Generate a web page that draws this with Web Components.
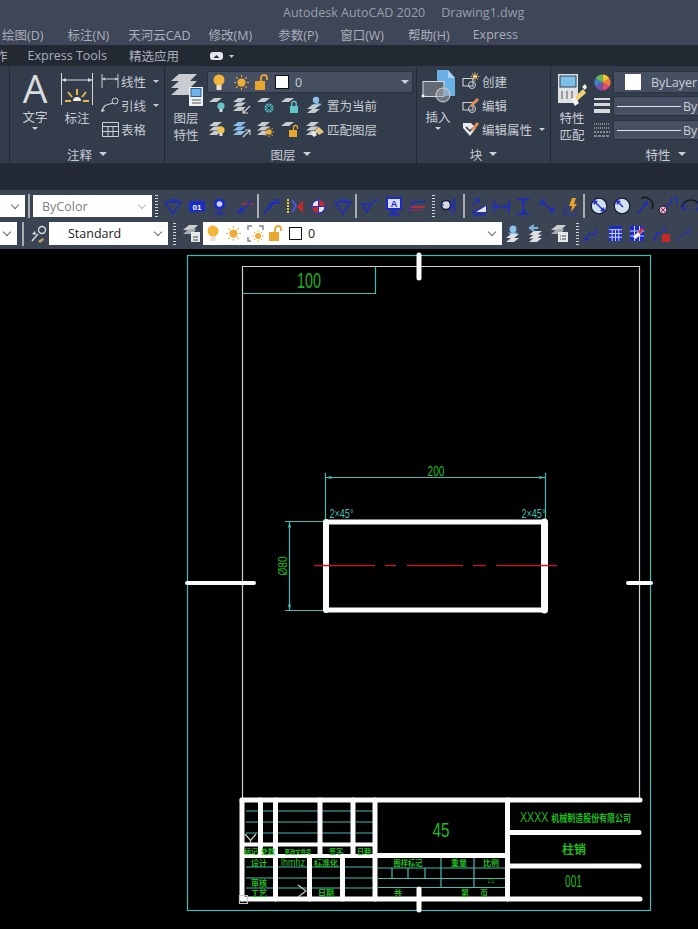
<!DOCTYPE html>
<html lang="zh">
<head>
<meta charset="utf-8">
<title>Autodesk AutoCAD 2020</title>
<style>
  html, body { margin: 0; height: 100%; background: #000; overflow: hidden; }
  body { font: 12.5px "Open Sans", "Noto Sans CJK SC", sans-serif; color: #c3c8d0; }
  #app { display: flex; flex-direction: column; width: 698px; height: 929px; overflow: hidden; }
</style>
</head>
<body>
<div id="app">
  <cad-title-bar>
    <span>Autodesk AutoCAD 2020</span>
    <span>Drawing1.dwg</span>
  </cad-title-bar>

  <cad-menu-bar>
    <span>绘图(D)</span>
    <span style="margin-left:24px">标注(N)</span>
    <span style="margin-left:19px">天河云CAD</span>
    <span style="margin-left:18px">修改(M)</span>
    <span style="margin-left:26px">参数(P)</span>
    <span style="margin-left:22px">窗口(W)</span>
    <span style="margin-left:24px">帮助(H)</span>
    <span style="margin-left:23px">Express</span>
  </cad-menu-bar>

  <cad-tab-bar>
    <span class="cut">作</span><span>Express Tools</span><span style="margin-left:2px">精选应用</span>
    <cad-icon name="tabpill" w="26" h="14"></cad-icon>
  </cad-tab-bar>

  <cad-ribbon>
    <cad-panel width="9"></cad-panel>

    <cad-panel width="155" label="注释" edge>
      <div style="display:flex;padding-left:8px">
        <cad-large-tool icon="bigA" arrow>文字</cad-large-tool>
        <cad-large-tool icon="dim" style="margin-left:8px">标注</cad-large-tool>
        <div style="display:flex;flex-direction:column;margin-left:7px;padding-top:3px">
          <cad-small-tool icon="linear" arrow>线性</cad-small-tool>
          <cad-small-tool icon="leader" arrow>引线</cad-small-tool>
          <cad-small-tool icon="table">表格</cad-small-tool>
        </div>
      </div>
    </cad-panel>

    <cad-panel width="252" label="图层" edge>
      <div style="display:flex;padding-left:4px">
        <cad-large-tool icon="layers">图层<br>特性</cad-large-tool>
        <div style="display:flex;flex-direction:column;margin-left:4px;padding-top:5px">
          <cad-combo width="206" height="22" tone="dark" caret>
            <cad-icon name="bulb" w="22"></cad-icon>
            <cad-icon name="sun" w="22"></cad-icon>
            <cad-icon name="lock" w="20"></cad-icon>
            <cad-icon name="swatch" w="20"></cad-icon>
            <span style="margin-left:3px">0</span>
          </cad-combo>
          <cad-icon-row text="置为当前">
            <cad-icon name="lOff" w="22"></cad-icon>
            <cad-icon name="lDown" w="25"></cad-icon>
            <cad-icon name="lFreeze" w="24"></cad-icon>
            <cad-icon name="lLock" w="24"></cad-icon>
            <cad-icon name="lCurrent" w="25"></cad-icon>
          </cad-icon-row>
          <cad-icon-row text="匹配图层">
            <cad-icon name="lBulb" w="22"></cad-icon>
            <cad-icon name="lUp" w="25"></cad-icon>
            <cad-icon name="lSun" w="24"></cad-icon>
            <cad-icon name="lOpen" w="24"></cad-icon>
            <cad-icon name="lMatch" w="25"></cad-icon>
          </cad-icon-row>
        </div>
      </div>
    </cad-panel>

    <cad-panel width="134" label="块" edge>
      <div style="display:flex;padding-left:4px">
        <cad-large-tool icon="insert" arrow>插入</cad-large-tool>
        <div style="display:flex;flex-direction:column;margin-left:7px;padding-top:3px">
          <cad-small-tool icon="blockNew">创建</cad-small-tool>
          <cad-small-tool icon="blockEdit">编辑</cad-small-tool>
          <cad-small-tool icon="attEdit" arrow>编辑属性</cad-small-tool>
        </div>
      </div>
    </cad-panel>

    <cad-panel width="230" label="特性" edge>
      <div style="display:flex;padding-left:4px">
        <cad-large-tool icon="match">特性<br>匹配</cad-large-tool>
        <div style="display:flex;flex-direction:column;width:24px;padding-top:4px">
          <cad-icon name="wheel" w="26" h="24"></cad-icon>
          <cad-icon name="weight" w="26" h="24"></cad-icon>
          <cad-icon name="dotted" w="26" h="24"></cad-icon>
        </div>
        <div style="display:flex;flex-direction:column;padding-top:5px">
          <cad-combo width="100" height="22" tone="dark"><cad-icon name="bigSwatch" w="34" h="18" style="margin-left:2px"></cad-icon><span style="margin-left:1px">ByLayer</span></cad-combo>
          <cad-combo width="100" height="20" tone="dark" style="margin-top:3px"><cad-line></cad-line><span style="margin-left:2px">ByLayer</span></cad-combo>
          <cad-combo width="100" height="20" tone="dark" style="margin-top:4px"><cad-line></cad-line><span style="margin-left:2px">ByLayer</span></cad-combo>
        </div>
      </div>
    </cad-panel>
  </cad-ribbon>

  <cad-strip></cad-strip>

  <cad-toolbar height="31" style="padding-top:1px">
    <cad-combo width="25" height="22" tone="light" caret></cad-combo>
    <cad-sep width="7"></cad-sep>
    <cad-combo width="119" height="22" tone="light" caret dim style="margin-left:1px"><span style="margin-left:9px;color:#7d8084">ByColor</span></cad-combo>
    <cad-grip width="9"></cad-grip>
    <cad-icon name="t1" w="24" h="22"></cad-icon>
    <cad-icon name="t2" w="23" h="22"></cad-icon>
    <cad-icon name="t3" w="23" h="22"></cad-icon>
    <cad-icon name="t4" w="26" h="22"></cad-icon>
    <cad-sep width="2"></cad-sep>
    <cad-icon name="t5" w="24" h="22"></cad-icon>
    <cad-icon name="t6" w="24" h="22"></cad-icon>
    <cad-icon name="t7" w="23" h="22"></cad-icon>
    <cad-icon name="t1" w="25" h="22"></cad-icon>
    <cad-sep width="2"></cad-sep>
    <cad-icon name="t8" w="25" h="22"></cad-icon>
    <cad-icon name="t9" w="23" h="22"></cad-icon>
    <cad-icon name="t10" w="24" h="22"></cad-icon>
    <cad-grip width="8"></cad-grip>
    <cad-icon name="t11" w="23" h="22"></cad-icon>
    <cad-sep width="7"></cad-sep>
    <cad-icon name="t12" w="23" h="22"></cad-icon>
    <cad-icon name="t13" w="22" h="22"></cad-icon>
    <cad-icon name="t14" w="22" h="22"></cad-icon>
    <cad-icon name="t15" w="26" h="22"></cad-icon>
    <cad-icon name="t16" w="20" h="22"></cad-icon>
    <cad-sep width="8"></cad-sep>
    <cad-icon name="t17" w="22" h="22"></cad-icon>
    <cad-icon name="t18" w="24" h="22"></cad-icon>
    <cad-icon name="t19" w="22" h="22"></cad-icon>
    <cad-icon name="t20" w="24" h="22"></cad-icon>
    <cad-icon name="t21" w="22" h="22"></cad-icon>
  </cad-toolbar>

  <cad-toolbar height="28" style="padding-bottom:3px">
    <cad-combo width="17" height="23" tone="light" caret></cad-combo>
    <cad-sep width="12"></cad-sep>
    <cad-icon name="styleIcon" w="20" h="22"></cad-icon>
    <cad-combo width="119" height="23" tone="light" caret><span style="margin-left:19px;color:#1d1d1d">Standard</span></cad-combo>
    <cad-grip width="12"></cad-grip>
    <cad-icon name="layerBox" w="23" h="22"></cad-icon>
    <cad-combo width="299" height="23" tone="light" caret>
      <cad-icon name="bulb" w="20"></cad-icon>
      <cad-icon name="sun" w="20"></cad-icon>
      <cad-icon name="vpFreeze" w="24"></cad-icon>
      <cad-icon name="lock" w="18"></cad-icon>
      <cad-icon name="swatchSmall" w="20"></cad-icon>
      <span style="margin-left:3px;color:#1d1d1d">0</span>
    </cad-combo>
    <cad-icon name="r1" w="22" h="22"></cad-icon>
    <cad-icon name="r2" w="24" h="22"></cad-icon>
    <cad-icon name="r3" w="22" h="22"></cad-icon>
    <cad-grip width="14"></cad-grip>
    <cad-icon name="r4" w="16" h="22"></cad-icon>
    <cad-spacer width="4"></cad-spacer>
    <cad-icon name="r5" w="22" h="22"></cad-icon>
    <cad-icon name="r6" w="22" h="22"></cad-icon>
    <cad-icon name="r7" w="28" h="22"></cad-icon>
    <cad-icon name="r8" w="18" h="22"></cad-icon>
  </cad-toolbar>

  <cad-drawing></cad-drawing>
</div>

<script>
// Small shape helpers shared by the icon table.
const BLUE = '#1a2bc8'
const GREY = '#c8cbd0'
const slab = (x, y, fill = GREY) => `<path d="M${x + 5} ${y}h8l-5 4H${x}z" fill="${fill}"/>`
const stack = (x, y, fill = GREY) => slab(x, y, fill) + slab(x, y + 4.5, fill) + slab(x, y + 9, fill)
const bulb = (cx, cy, c) => `<circle cx="${cx}" cy="${cy}" r="3.600" fill="${c}"/><rect x="${cx - 1.5}" y="${cy + 3}" width="3" height="3" fill="#d8d8d8"/>`
const padlock = (x, y, c) => `<rect x="${x}" y="${y + 5}" width="8" height="7" fill="${c}"/><path d="M${x + 1.8} ${y + 5}V${y + 2.5}a2.200 2.200 0 0 1 4.400 0V${y + 5}" fill="none" stroke="${c}" stroke-width="1.400"/>`
const rays = (cx, cy, r, c) => {
  let out = `<circle cx="${cx}" cy="${cy}" r="${r * 0.55}" fill="${c}"/>`
  for (let i = 0; i < 8; i++) {
    const a = i * Math.PI / 4
    out += `<path d="M${cx + Math.cos(a) * r * 0.72} ${cy + Math.sin(a) * r * 0.72}L${cx + Math.cos(a) * r} ${cy + Math.sin(a) * r}" stroke="${c}" stroke-width="1.100"/>`
  }
  return out
}
const line = (d, c = BLUE, w = 1.4) => `<path d="${d}" fill="none" stroke="${c}" stroke-width="${w}"/>`
const dashed = (d, dash) => line(d, '#d5d7da', 1).replace('/>', ` stroke-dasharray="${dash}"/>`)

// name: [svg width, svg height, markup]
const ICONS = {
  tabpill: [24, 10, '<rect x="0" y="1" width="13" height="8" rx="3" fill="#e4e6ea"/><path d="M3.500 7l3-3 3 3z" fill="#2a313c"/><path d="M19 4h5l-2.500 3z" fill="#c8ccd3"/>'],
  bigA: [32, 32, '<text x="16" y="30" text-anchor="middle" font-family="Open Sans" font-size="39" fill="#d9dbdf">A</text>'],
  dim: [32, 33, line('M.5 0V32M31.5 0V32', '#d5d7da', 1) + line('M1 7H31', '#d5d7da', 1) + '<path d="M1 7l4-2v4zM31 7l-4-2v4z" fill="#d5d7da"/>' + line('M16 16v6M7 19l4 5M25 19l-4 5M4 28h6M22 28h6', '#e6b845', 2) + '<path d="M12 28a4 4 0 0 1 8 0z" fill="#f2efe2"/>'],
  linear: [18, 16, line('M1 1V15M17 1V15', '#cdd0d5', 1) + line('M1 6H17', '#cdd0d5', 1) + '<path d="M1 6l3-1.500v3zM17 6l-3-1.500v3z" fill="#cdd0d5"/>'],
  leader: [18, 16, line('M1 14C3 7 6 8 12 6', '#cdd0d5', 1.2) + '<circle cx="14" cy="4" r="3" fill="none" stroke="#cdd0d5"/><path d="M0 15l4-1-3-3z" fill="#cdd0d5"/>'],
  table: [17, 15, line('M.5 .5H16.500V14.500H.5ZM.5 4.500H16.500M.5 9.500H16.500M6 4.500V14.500M11 4.500V14.500', '#cdd0d5', 1)],
  layers: [33, 33, '<path d="M9 1H27L20 8H1z" fill="#c9ccd1"/><path d="M9 8H27L20 15H1z" fill="#c9ccd1"/><path d="M9 15H20V22H1z" fill="#c9ccd1"/><rect x="19" y="14" width="14" height="19" fill="#eef0f2"/><rect x="21" y="15.500" width="10" height="8" fill="#6fb2e8" stroke="#2c5f8e"/>' + line('M22 27h9M31 30h-9', '#555', 1)],
  bulb: [12, 17, '<circle cx="6" cy="6" r="5.500" fill="#f4b63a"/><rect x="3.500" y="11" width="5" height="5" fill="#e8e2d2"/>'],
  sun: [15, 15, rays(7.5, 7.5, 7.5, '#f0ad3b')],
  lock: [14, 15, '<rect x="0" y="6" width="10" height="9" fill="#eba62f"/><path d="M6 6V3a3 3 0 0 1 6 0v2" fill="none" stroke="#eba62f" stroke-width="1.800"/>'],
  swatch: [14, 14, '<rect x=".5" y=".5" width="13" height="13" fill="#fff" stroke="#111"/>'],
  swatchSmall: [13, 13, '<rect x=".5" y=".5" width="12" height="12" fill="#fff" stroke="#111"/>'],
  bigSwatch: [16, 16, '<rect width="16" height="16" fill="#fff"/>'],
  lOff: [18, 17, slab(0, 1) + bulb(12, 9, '#67c6c9')],
  lDown: [18, 17, stack(0, 1) + line('M17 9l-7 7M10 11v5h5', '#d8dade', 1.1)],
  lFreeze: [18, 17, slab(0, 1) + '<circle cx="12" cy="11" r="4.500" fill="#4fb3b5"/>' + line('M12 6.500v9M7.500 11h9M9 8l6 6M15 8l-6 6', '#27303d', .7)],
  lLock: [18, 17, slab(0, 1) + padlock(9, 4, '#62c5c8')],
  lCurrent: [18, 18, '<circle cx="10" cy="4" r="3.200" fill="#8cc1ea"/><path d="M5 9l6-2 5 1-5 3z" fill="#8cc1ea"/>' + slab(1, 9, GREY) + slab(1, 13, GREY)],
  lBulb: [18, 17, stack(0, 1) + bulb(12, 9, '#f4c04d')],
  lUp: [18, 17, stack(0, 1, '#8abfe8') + line('M10 16l7-7M12 9h5v5', '#d8dade', 1.1)],
  lSun: [18, 17, stack(0, 1) + rays(12, 11, 5, '#e9ad3b')],
  lOpen: [18, 17, slab(0, 1) + '<rect x="8" y="9" width="8" height="7" fill="#eba62f"/><path d="M12.500 9V6.500a2 2 0 0 1 4 0V8" fill="none" stroke="#eba62f" stroke-width="1.300"/>'],
  lMatch: [18, 17, stack(0, 1) + '<path d="M9 9l4-3 5 5-5 3z" fill="#e5c784"/><path d="M8 10l3 4-3 2-3-3z" fill="#e8e8e8"/>'],
  insert: [33, 32, '<g transform="translate(0 -3)"><path d="M15 0h11l7 8v18H15z" fill="#69b0e6"/><path d="M26 0l7 8h-7z" fill="#a9d2f2"/><rect x="1" y="11.500" width="21" height="15" fill="#646a74" stroke="#d6d8dc"/><circle cx="21" cy="25" r="7" fill="rgba(160,165,175,.55)" stroke="#d6d8dc"/><circle cx="1" cy="26" r="1.500" fill="#fff"/></g>'],
  blockNew: [18, 17, line('M1 6.500H11V14H1Z', '#cfd2d6', 1.1) + '<circle cx="10" cy="13" r="3.500" fill="none" stroke="#cfd2d6"/>' + rays(13, 4.5, 4.2, '#eec278')],
  blockEdit: [18, 17, line('M1 6.500H11V14H1Z', '#cfd2d6', 1.1) + '<circle cx="10" cy="13" r="3.500" fill="none" stroke="#cfd2d6"/><path d="M9 8l6-6 2 2-6 6-3 1z" fill="#eb8b55"/>'],
  attEdit: [18, 17, '<path d="M1 3H9l5 5-6 8-7-8z" fill="#e7e8ea"/><path d="M4 7l4 4 3-3" fill="none" stroke="#2f3846" stroke-width="1.500"/><path d="M10 8l5-6 2 2-5 6-3 1z" fill="#eb8b55"/>'],
  match: [30, 33, '<rect x="1" y="1" width="20" height="29" fill="#dfe1e4"/><rect x="3" y="3" width="16" height="11" fill="#7cc0ee" stroke="#31424f"/>' + line('M5 18v8M10 18v8M15 18v8', '#555', 1) + '<path d="M17 25l9-9 3 4-9 8z" fill="#f1d374"/><path d="M14 26l4-2 4 6-4 3z" fill="#f0f0f0"/><path d="M25 14l3-3 2 3-2 3z" fill="#eee"/>'],
  wheel: [17, 17, '<path d="M8.500 8.500V.5a8 8 0 0 1 6.900 4z" fill="#f7c52d"/><path d="M8.500 8.500l6.900-4a8 8 0 0 1 0 8z" fill="#f37c3a"/><path d="M8.500 8.500l6.900 4a8 8 0 0 1-6.900 4z" fill="#d94a77"/><path d="M8.500 8.500v8a8 8 0 0 1-6.900-4z" fill="#7d4fa8"/><path d="M8.500 8.500l-6.900 4a8 8 0 0 1 0-8z" fill="#3a82c4"/><path d="M8.500 8.500l-6.900-4a8 8 0 0 1 6.900-4z" fill="#5fb85b"/>'],
  weight: [16, 16, '<rect y="0" width="16" height="2" fill="#d5d7da"/><rect y="5" width="16" height="3" fill="#d5d7da"/><rect y="11" width="16" height="4" fill="#d5d7da"/>'],
  dotted: [16, 15, dashed('M0 1H16', '1 1') + dashed('M0 5H16', '1 1') + dashed('M0 9H16', '2 1') + dashed('M0 13H16', '3 1')],
  t1: [18, 18, line('M1 5H17L9 17Z') + line('M6 3H14')],
  t2: [16, 11, `<rect width="16" height="11" fill="${BLUE}"/><text x="8" y="8.500" text-anchor="middle" font-family="Liberation Sans" font-weight="700" font-size="8" fill="#fff">01</text>`],
  t3: [13, 17, `<circle cx="6.500" cy="6" r="5.500" fill="${BLUE}"/><circle cx="6.500" cy="6" r="2.800" fill="#cdd5ff"/>` + line('M6.500 12V15M1 16H12')],
  t4: [17, 14, line('M6 5H17', '#c62828', 1.500) + line('M16 2L5 12M1 13L8 13') + `<path d="M1 13l4-5 2 3z" fill="${BLUE}"/>`],
  t5: [17, 17, line('M1 16L8 5H17') + line('M6 12L12 2H17')],
  t6: [17, 17, '<path d="M1 1v15" stroke="#dfd23a" stroke-dasharray="2 1" stroke-width="2"/><path d="M5 2l4 6-4 6" stroke="#4b55e0" fill="none" stroke-width="2"/><path d="M16 2v13l-6-6z" fill="#c62828"/>'],
  t7: [17, 17, `<circle cx="8.500" cy="8.500" r="6.500" fill="#e7e8f2" stroke="${BLUE}"/><path d="M8.500 8.500V2a6.500 6.500 0 0 1 6.500 6.500z" fill="#c62828"/><path d="M8.500 8.500V15a6.500 6.500 0 0 1-6.500-6.500z" fill="#c62828"/>` + line('M0 8.500H17M8.500 0V17', BLUE, 1)],
  t8: [18, 14, line('M0 5H10L6 13L1 5M10 5L15 1H18')],
  t9: [16, 17, `<rect x="1" y="0" width="14" height="11" fill="#d6dcf6" stroke="${BLUE}" stroke-width="2"/><text x="8" y="9" text-anchor="middle" font-family="Liberation Sans" font-weight="700" font-size="9" fill="${BLUE}">A</text><path d="M8 11l4 4H4z" fill="${BLUE}"/>` + line('M2 16.500H14', BLUE, 1.600)],
  t10: [18, 16, line('M1 15L5 4H17', BLUE) + line('M3 9H17', '#b0303c', 2) + line('M1 12H14', '#8a2f5e', 1.400)],
  t11: [18, 18, '<circle cx="6" cy="8" r="4.500" fill="#d8dae0" stroke="#161b3e" stroke-width="1.400"/>' + line('M1 8H4M9 12L14 17M14 1V13M16 2L11 8L16 13', BLUE, 1.200)],
  t12: [16, 17, line('M1 14H15V8L3 14ZM2 16.500H15', BLUE) + '<path d="M15 8v6H5z" fill="#e8e8e8"/>' + line('M2 7L8 1M3 1H8V6', BLUE, 1.200)],
  t13: [17, 13, line('M1 0V13M16 0V13M1 6.500H16') + `<path d="M1 6.500l4-2.500v5zM16 6.500l-4-2.500v5z" fill="${BLUE}"/>`],
  t14: [13, 17, line('M0 1H13M0 16H13M6.500 1V16') + `<path d="M6.500 1l-2.500 4h5zM6.500 16l-2.500-4h5z" fill="${BLUE}"/>`],
  t15: [17, 16, line('M2 3L15 14M0 7L6 1M11 15L17 9') + `<path d="M2 3l5 1-3 3zM15 14l-5-1 3-3z" fill="${BLUE}"/>`],
  t16: [17, 17, line('M0 12H16M4 5V17M0 17H16', BLUE, 1).replace('/>', ' stroke-dasharray="2 1"/>') + '<path d="M10 0l-3 8h3l-1 6 6-8h-3l2-6z" fill="#eaa128"/>'],
  t17: [18, 18, '<circle cx="9" cy="9" r="7.800" fill="#cfe0ee" stroke="#1a1c33" stroke-width="1.300"/>' + line('M4 4L14 14') + `<path d="M3 3l5 1-4 4zM15 15l-5-1 4-4z" fill="${BLUE}"/>`],
  t18: [18, 18, '<circle cx="9" cy="9" r="7.800" fill="#cfe0ee" stroke="#1a1c33" stroke-width="1.300"/>' + line('M4 4L10 10') + `<path d="M3 3l5 1-4 4z" fill="${BLUE}"/>`],
  t19: [18, 18, line('M5 1.500A8 8 0 0 1 16 12', '#16181f', 1.500) + line('M2 16L11 5') + `<path d="M12 4l-1 5-4-3z" fill="${BLUE}"/>`],
  t20: [20, 18, '<circle cx="5" cy="13" r="4" fill="#e7b4c8" stroke="#1a1c33"/>' + line('M2.500 10.500l5 5M7.500 10.500l-5 5', '#8a2f5e', 1) + line('M8 10L13 6V1H19V7', BLUE, 1.200)],
  t21: [20, 12, line('M1 8A9 8 0 0 1 19 8', '#16181f', 1.500) + line('M4 3L1 8L6 10M16 3L19 8L14 10')],
  styleIcon: [18, 18, line('M2 16L8 9', '#d8dade', 1.500) + '<circle cx="12" cy="5" r="3.500" fill="none" stroke="#d8dade" stroke-width="1.400"/><path d="M2 9l3-3 1 4z" fill="#d8dade"/><path d="M8 16l5-3 1 2-4 3z" fill="#c6a26a"/>'],
  layerBox: [17, 17, '<path d="M6 0h9l-5 5H0z" fill="#c9ccd1"/><path d="M6 4h7l-3 5H0z" fill="#a9acb1"/><rect x="8" y="7" width="9" height="10" fill="#e6e8ea"/>' + line('M10 12h5M10 15h5', '#444', 1)],
  vpFreeze: [17, 17, line('M1 5V1H5M12 1H16V5M1 12V16H4', '#7b7f86', 1.400) + rays(11, 11, 5.5, '#f0ad3b')],
  r1: [18, 17, '<circle cx="9" cy="4" r="3.500" fill="#8cc1ea"/><path d="M4 8l5-1 5 1-5 3z" fill="#8cc1ea"/>' + slab(2, 9, '#dfe1e4') + slab(2, 13, '#dfe1e4')],
  r2: [18, 17, line('M11 3H4M7 0L3 3L7 6', '#7fb7e4', 2) + slab(2, 6, '#dfe1e4') + slab(2, 9.5, '#dfe1e4') + slab(2, 13, '#dfe1e4')],
  r3: [17, 17, '<path d="M6 0h9l-5 5H0z" fill="#c9ccd1"/><path d="M6 4h7l-3 5H0z" fill="#a9acb1"/><rect x="7" y="7" width="10" height="10" fill="#e6e8ea"/>' + line('M9 11h1M11 11h4M9 14h1M11 14h4', '#444', 1)],
  r4: [18, 16, line('M1 15L6 8H13') + `<circle cx="4" cy="13" r="1.500" fill="${BLUE}"/><text x="13" y="6.500" text-anchor="middle" font-family="Liberation Sans" font-size="8" fill="${BLUE}">3</text>`],
  r5: [13, 15, `<rect width="13" height="15" fill="${BLUE}"/>` + line('M0 3.700H13M0 7.500H13M0 11.200H13M3.200 3V15M6.500 3V15M9.800 3V15', '#c9d0f5', 1)],
  r6: [14, 15, `<rect width="14" height="15" fill="${BLUE}"/>` + line('M0 5H14M0 10H14M4.500 0V15M9.500 0V15', '#c9d0f5', 1) + '<path d="M3 11l8-8 2 2-7 8z" fill="#f2f2f2"/><path d="M8 6l4-5 2 2-4 5z" fill="#cc2f2f"/>'],
  r7: [18, 17, line('M1 16L4 8H9') + `<text x="11" y="6.500" text-anchor="middle" font-family="Liberation Sans" font-size="8" fill="${BLUE}">3</text><rect x="9" y="9" width="8" height="8" fill="#c62828"/>`],
  r8: [18, 16, line('M1 15L7 7H12').replace('/>', ' stroke-dasharray="2 1.500"/>') + `<text x="13" y="6.500" text-anchor="middle" font-family="Liberation Sans" font-size="8" fill="${BLUE}">3</text>`]
}

/**
 * Defines a component whose shadow root is cloned from the given markup.
 *
 * @param {string} tag - Element name.
 * @param {string} html - Template markup.
 * @param {Function} [setup] - Called with the element once it is connected.
 */
function component (tag, html, setup) {
  const template = document.createElement('template')
  template.innerHTML = html
  customElements.define(tag, class extends HTMLElement {
    constructor () {
      super()
      this.attachShadow({ mode: 'open' }).appendChild(template.content.cloneNode(true))
    }

    connectedCallback () {
      if (setup) setup(this, this.shadowRoot)
    }
  })
}

const arrowCss = `.arrow { width: 0; height: 0; border: 3px solid transparent; border-top: 3px solid #c8ccd3; border-bottom: 0; }`

component('cad-icon', `
  <style>
    :host { display: inline-flex; flex: none; align-items: center; justify-content: center; }
    svg { flex: none; display: block; overflow: visible; }
  </style>
  <div id="glyph" style="display:contents"></div>
`, (el, root) => {
  const [w, h, body] = ICONS[el.getAttribute('name')]
  el.style.width = (el.getAttribute('w') || w) + 'px'
  el.style.height = (el.getAttribute('h') || 22) + 'px'
  root.querySelector('#glyph').innerHTML = `<svg width="${w}" height="${h}" viewBox="0 0 ${w} ${h}">${body}</svg>`
})

component('cad-title-bar', `
  <style>
    :host { display: flex; flex: none; height: 23px; align-items: center; gap: 16px; padding-left: 283px; padding-top: 1px; box-sizing: border-box; background: #3e4657; color: #98a0ad; }
  </style>
  <slot></slot>
`)

component('cad-menu-bar', `
  <style>
    :host { display: flex; flex: none; height: 22px; align-items: center; padding-left: 2px; background: #3e4657; color: #aab0bb; white-space: nowrap; }
  </style>
  <slot></slot>
`)

component('cad-tab-bar', `
  <style>
    :host { display: flex; flex: none; height: 21px; align-items: center; gap: 20px; background: #222933; color: #aab0bb; white-space: nowrap; }
    ::slotted(.cut) { margin-left: -5px; }
    ::slotted(cad-icon) { margin-left: 10px; }
  </style>
  <slot></slot>
`)

component('cad-ribbon', `
  <style>
    :host { display: flex; flex: none; height: 97px; overflow: hidden; background: #333c4b; }
  </style>
  <slot></slot>
`)

component('cad-panel', `
  <style>
    :host { display: flex; flex: none; flex-direction: column; box-sizing: border-box; height: 97px; color: #c8ccd3; overflow: hidden; }
    :host([edge]) { border-left: 1px solid #232a35; }
    .body { height: 76px; flex: none; }
    .foot { display: flex; flex: none; height: 24px; align-items: center; justify-content: center; gap: 7px; color: #c8ccd3; }
    .foot i { width: 0; height: 0; border: 4px solid transparent; border-top: 4px solid #c8ccd3; border-bottom: 0; }
    .foot:empty { display: none; }
  </style>
  <div class="body"><slot></slot></div>
  <div class="foot"></div>
`, (el, root) => {
  el.style.width = el.getAttribute('width') + 'px'
  const label = el.getAttribute('label')
  if (label) root.querySelector('.foot').innerHTML = `<span>${label}</span><i></i>`
})

component('cad-large-tool', `
  <style>
    :host { display: flex; flex: none; flex-direction: column; align-items: center; width: 34px; padding-top: 4px; line-height: 17px; text-align: center; }
    ${arrowCss}
    .arrow { margin-top: 1px; }
  </style>
  <div class="icon"></div>
  <span><slot></slot></span>
  <div class="arrow"></div>
`, (el, root) => {
  root.querySelector('.icon').innerHTML = `<cad-icon name="${el.getAttribute('icon')}" w="34" h="38"></cad-icon>`
  if (!el.hasAttribute('arrow')) root.querySelector('.arrow').style.display = 'none'
})

component('cad-small-tool', `
  <style>
    :host { display: flex; flex: none; height: 24px; align-items: center; white-space: nowrap; }
    span { margin-left: 2px; }
    ${arrowCss}
    .arrow { margin-left: 7px; }
  </style>
  <div class="icon"></div>
  <span><slot></slot></span>
  <div class="arrow"></div>
`, (el, root) => {
  root.querySelector('.icon').innerHTML = `<cad-icon name="${el.getAttribute('icon')}" w="18" h="24"></cad-icon>`
  if (!el.hasAttribute('arrow')) root.querySelector('.arrow').style.display = 'none'
})

component('cad-icon-row', `
  <style>
    :host { display: flex; flex: none; height: 24px; align-items: center; white-space: nowrap; }
  </style>
  <slot></slot><span></span>
`, (el, root) => {
  root.querySelector('span').textContent = el.getAttribute('text')
})

component('cad-combo', `
  <style>
    :host { display: flex; flex: none; box-sizing: border-box; align-items: center; white-space: nowrap; overflow: hidden; }
    :host([tone=dark]) { background: #465062; color: #c9cdd4; border: 1px solid #2a323f; border-radius: 2px; }
    :host([tone=light]) { background: #fff; color: #1d1d1d; }
    .caret { margin-left: auto; flex: none; }
    :host([tone=dark]) .caret { width: 0; height: 0; margin-right: 3px; border: 4px solid transparent; border-top: 4px solid #c9cdd4; border-bottom: 0; }
    :host([tone=light]) .caret { width: 6px; height: 6px; box-sizing: border-box; margin-right: 7px; margin-top: -3px; border: solid #6a6a6a; border-width: 0 1.3px 1.3px 0; transform: rotate(45deg); }
    :host([dim]) .caret { border-color: #b9bbbe; }
  </style>
  <slot></slot>
  <div class="caret"></div>
`, (el, root) => {
  el.style.width = el.getAttribute('width') + 'px'
  el.style.height = el.getAttribute('height') + 'px'
  if (!el.hasAttribute('caret')) root.querySelector('.caret').style.display = 'none'
})

component('cad-line', `
  <style>
    :host { display: block; flex: none; width: 64px; height: 1px; margin-left: 3px; background: #e4e6ea; }
  </style>
`)

component('cad-strip', `
  <style>
    :host { display: block; flex: none; height: 27px; background: #232a35; }
  </style>
`)

component('cad-toolbar', `
  <style>
    :host { display: flex; flex: none; align-items: center; box-sizing: border-box; background: #3b4452; overflow: hidden; }
  </style>
  <slot></slot>
`, (el) => { el.style.height = el.getAttribute('height') + 'px' })

component('cad-sep', `
  <style>
    :host { display: flex; flex: none; height: 24px; justify-content: center; }
    div { width: 2px; height: 100%; background: #a9adb3; }
  </style>
  <div></div>
`, (el) => { el.style.width = el.getAttribute('width') + 'px' })

component('cad-grip', `
  <style>
    :host { display: flex; flex: none; height: 22px; justify-content: center; }
    div { width: 3px; height: 100%; background: repeating-linear-gradient(#cfd2d6 0 1px, transparent 1px 3px); }
  </style>
  <div></div>
`, (el) => { el.style.width = el.getAttribute('width') + 'px' })

component('cad-spacer', `
  <style>:host { display: block; flex: none; }</style>
`, (el) => { el.style.width = el.getAttribute('width') + 'px' })

// Free canvas: coordinates below are page pixels, the viewBox starts at the canvas top.
const drawingSvg = () => {
  const GREEN = '#1fbd1f'
  const CYAN = '#45bcb0'
  const WHITE = '#fbfbfb'
  const seg = (d, w = 5) => `<path d="${d}" fill="none" stroke="${WHITE}" stroke-width="${w}" stroke-linecap="round"/>`
  const thin = (d, c = CYAN) => `<path d="${d}" fill="none" stroke="${c}" stroke-width="1.200"/>`
  const narrow = (x, y, s, len, size, fill = GREEN) => `<text x="${x}" y="${y}" text-anchor="middle" textLength="${len}" lengthAdjust="spacingAndGlyphs" font-family="Liberation Sans" font-size="${size}" fill="${fill}">${s}</text>`
  const cn = (x, y, s, size = 9, len) => `<text x="${x}" y="${y}" text-anchor="middle" ${len ? `textLength="${len}" lengthAdjust="spacingAndGlyphs"` : ''} font-family="Noto Sans CJK SC" font-weight="700" font-size="${size}" fill="${GREEN}">${s}</text>`

  return `
  <svg width="698" height="680" viewBox="0 249 698 680" xmlns="http://www.w3.org/2000/svg">
    <rect x="187.500" y="255.500" width="463" height="655" fill="none" stroke="${CYAN}" stroke-width="1.200"/>
    <path d="M242.500 800V266.500H639.500V800" fill="none" stroke="#cfcfcf" stroke-width="1.200"/>
    ${thin('M242.500 293.500H375.500V266.500')}
    ${narrow(309, 288, '100', 24, 22, '#20b020')}

    ${thin('M325.500 521V473M545.500 521V473M325.500 477.500H545.500')}
    <path d="M325.500 477.500l6-1.500v3zM545.500 477.500l-6-1.500v3z" fill="${CYAN}"/>
    ${narrow(436, 476, '200', 17, 14)}
    ${narrow(341.500, 518, '2×45°', 24, 13, CYAN)}
    ${narrow(533.500, 518, '2×45°', 24, 13, CYAN)}
    ${thin('M329.500 520.500H352M522 520.500H545')}
    ${thin('M285 521.500H325M285 610.500H325M289.500 521.500V610.500')}
    <path d="M289.500 521.500l-1.500 6h3zM289.500 610.500l-1.500-6h3z" fill="${CYAN}"/>
    <text transform="translate(287 566) rotate(-90)" text-anchor="middle" textLength="19" lengthAdjust="spacingAndGlyphs" font-family="Liberation Sans" font-size="13" fill="${GREEN}">Ø80</text>

    ${seg('M326 522H545', 5)}
    ${seg('M326 610H545', 5)}
    ${seg('M326 522V610', 6)}
    ${seg('M544.500 522V610', 7)}
    <path d="M314 565.500H375M385 565.500H396M407 565.500H463M473 565.500H486M496 565.500H557" stroke="#b02222" stroke-width="1.500" fill="none"/>

    ${thin('M246 811H259M262 811H274M278 811H318M322 811H352M356 811H373')}
    ${thin('M246 822H259M262 822H274M278 822H318M322 822H352M356 822H373')}
    ${thin('M246 833H259M262 833H274M278 833H318M322 833H352M356 833H373')}
    ${thin('M246 867H274M278 867H308M312 867H341M345 867H373')}
    ${thin('M246 878H274M278 878H308M312 878H341M345 878H373')}
    ${thin('M246 888H274M278 888H308M312 888H341M345 888H373')}
    ${thin('M378 868H505M378 878.500H505M378 887.500H505')}
    ${thin('M392 868V878M408 868V878M425 868V878M441 857V887M474 857V887')}

    ${seg('M242 800H640')}
    ${seg('M242 899H640')}
    ${seg('M242 800V899')}
    ${seg('M507.500 800V899')}
    ${seg('M375 800V899')}
    ${seg('M375 855.500H507', 5)}
    ${seg('M508 832.500H639', 5)}
    ${seg('M508 866H639', 5)}
    ${seg('M260.500 800V855', 5)}
    ${seg('M275.500 800V899', 5)}
    ${seg('M320 800V855', 5)}
    ${seg('M353 800V855', 5)}
    ${seg('M309.500 856V899', 5)}
    ${seg('M342.500 856V899', 5)}
    ${seg('M242 844.500H375', 4)}
    ${seg('M242 856H375', 4)}

    ${thin('M245 834l5.500 6.500 5.500-6.500M250.500 840.500V843', '#c9c9c9')}
    ${thin('M298 885l8 6-8 6', '#c9c9c9')}
    ${thin('M239.500 895.500H247.500V903.500H239.500Z', '#c9c9c9')}

    ${cn(251, 853.500, '标记', 7)}
    ${cn(268, 853.500, '处数', 7)}
    ${cn(298, 853.500, '更改文件号', 6, 27)}
    ${cn(336, 853.500, '签字', 7)}
    ${cn(364, 853.500, '日期', 7)}
    ${cn(259, 866, '设计', 8)}
    ${narrow(293, 866, 'lhmhz', 24, 10)}
    ${cn(326, 866, '标准化', 8)}
    ${cn(408, 866, '图样标记', 8, 29)}
    ${cn(459, 866, '重量', 8)}
    ${cn(491, 866, '比例', 8)}
    ${cn(259, 886, '审核', 8)}
    ${cn(259, 896, '工艺', 8)}
    ${cn(326, 896, '日期', 8)}
    ${cn(398, 896, '共', 8)}
    ${cn(465, 896, '第', 8)}
    ${cn(484, 896, '页', 8)}
    ${narrow(491, 883, '1:2', 7, 8)}
    ${narrow(441, 837, '45', 17, 21)}
    <text x="575.500" y="822" text-anchor="middle" textLength="111" lengthAdjust="spacingAndGlyphs" font-family="Liberation Sans, Noto Sans CJK SC" fill="${GREEN}"><tspan font-size="14">XXXX </tspan><tspan font-size="10.500" font-family="Noto Sans CJK SC" font-weight="700">机械制造股份有限公司</tspan></text>
    ${cn(574, 854, '柱销', 12)}
    ${narrow(573.500, 887, '001', 17, 16)}

    ${seg('M419 255V278', 5)}
    ${seg('M419 889V910', 5)}
    ${seg('M187 583H254', 4)}
    ${seg('M628 583H651', 4)}
  </svg>`
}

component('cad-drawing', `
  <style>
    :host { display: block; flex: none; height: 680px; background: #000; }
    svg { display: block; }
  </style>
  <div id="sheet"></div>
`, (el, root) => { root.querySelector('#sheet').innerHTML = drawingSvg() })
</script>
</body>
</html>
